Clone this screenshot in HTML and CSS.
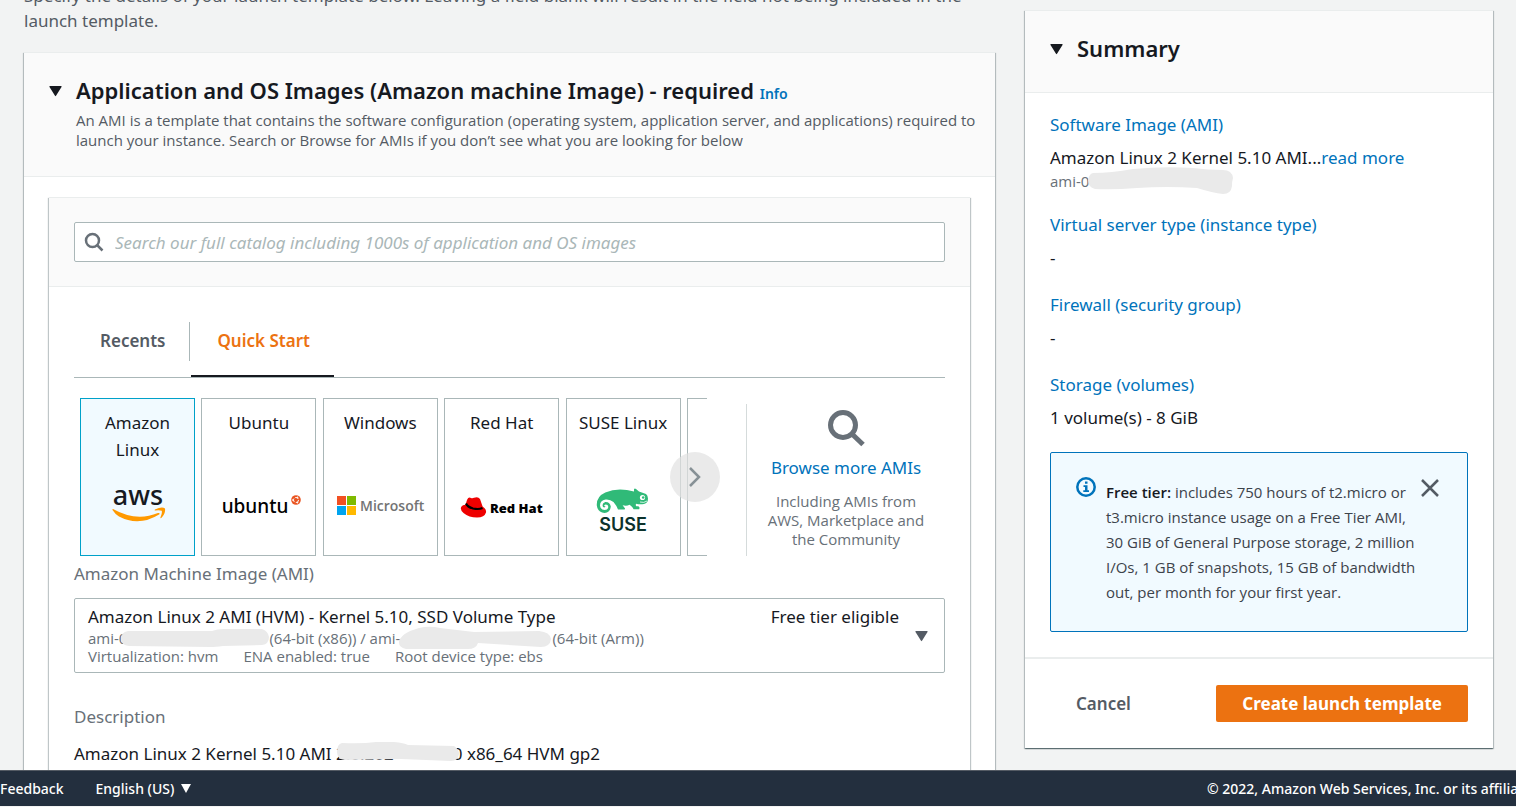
FILE: index.html
```html
<!DOCTYPE html>
<html lang="en">
<head>
<meta charset="utf-8">
<title>Create launch template</title>
<link rel="stylesheet" href="styles.css">
</head>
<body>
<main class="page">
  <div class="content">
    <p class="intro">Specify the details of your launch template below. Leaving a field blank will result in the field not being included in the launch template.</p>

    <section class="panel">
      <header class="panel-head">
        <svg class="caret" viewBox="0 0 13 11"><path d="M1 0h11q1 0 .5 1L7 9.800q-.5.800-1 0L.5 1Q0 0 1 0z"/></svg>
        <div>
          <h2 class="title">Application and OS Images (Amazon machine Image) - required <a class="info" href="#">Info</a></h2>
          <p class="lead">An AMI is a template that contains the software configuration (operating system, application server, and applications) required to launch your instance. Search or Browse for AMIs if you don’t see what you are looking for below</p>
        </div>
      </header>
      <div class="panel-body">
        <div class="catalog">
          <div class="catalog-search">
            <label class="search">
              <svg class="search-icon" viewBox="0 0 20 20"><circle cx="8.500" cy="8.500" r="6.500"/><path d="M13 13l5.500 5.500"/></svg>
              <input type="text" aria-label="Search catalog" placeholder="Search our full catalog including 1000s of application and OS images">
            </label>
          </div>
          <div class="catalog-body">
            <div class="tabs" role="tablist">
              <button class="tab" role="tab">Recents</button>
              <span class="tab-rule"></span>
              <button class="tab tab-active" role="tab" aria-selected="true">Quick Start</button>
            </div>

            <div class="picker">
              <div class="carousel">
                <button class="os os-selected"><span class="os-name">Amazon Linux</span>
                  <svg class="logo" viewBox="0 0 100 60">
                    <text class="logo-aws" x="50" y="27" text-anchor="middle">aws</text>
                    <path fill="#f90" d="M25 31q23 13 45 4 2-.5 1.500 1.200Q51 49 31 38.500q-4-2.500-6.500-6.500-.3-1 .5-1zM67 31.500q7-3.200 10-1 .8 5-3.700 9.500-1.200.6-.8-.8 2-4.500 1.200-6.500-2.200-.8-6.200-.2-1.400 0-.5-1z"/>
                  </svg></button>
                <button class="os"><span class="os-name">Ubuntu</span>
                  <svg class="logo" viewBox="0 0 100 60">
                    <text class="logo-ubuntu" x="46" y="35" text-anchor="middle">ubuntu</text>
                    <circle cx="87" cy="22" r="4.800" fill="#e95420"/>
                    <circle cx="87" cy="22" r="2.500" fill="none" stroke="#fff" stroke-width="1" stroke-dasharray="4 1.200"/>
                    <g fill="#fff"><circle cx="83.800" cy="22" r=".8"/><circle cx="88.600" cy="19.300" r=".8"/><circle cx="88.600" cy="24.700" r=".8"/></g>
                  </svg></button>
                <button class="os"><span class="os-name">Windows</span>
                  <svg class="logo" viewBox="0 0 100 60">
                    <path fill="#f25022" d="M7 18h9v9H7z"/><path fill="#7fba00" d="M17 18h9v9h-9z"/><path fill="#00a4ef" d="M7 28h9v9H7z"/><path fill="#ffb900" d="M17 28h9v9h-9z"/>
                    <text class="logo-ms" x="30" y="33">Microsoft</text>
                  </svg></button>
                <button class="os"><span class="os-name">Red Hat</span>
                  <svg class="logo" viewBox="0 0 100 60">
                    <g transform="translate(0 1)">
                      <path fill="#e00" d="M15 21q1.500-3.500 4-2 1.500.6 3-.2 4-1.800 6 1.200l2.600 7.500q4 2.500 3.400 6-1.500 5-9 5-8 0-13.500-4.500-4-3.500-2-6.500 1-1.500 4-1.800z"/>
                      <path fill="none" stroke="#000" stroke-width="2.200" d="M14 24.500q1.500 3.500 7 5 6 1.200 9.500-.5"/>
                    </g>
                    <text class="logo-redhat" x="38" y="35">Red Hat</text>
                  </svg></button>
                <button class="os"><span class="os-name">SUSE Linux</span>
                  <svg class="logo" viewBox="0 0 100 60">
                    <g transform="translate(0 4)">
                      <path fill="#30ba78" d="M61 7.500Q61.500 6 63 7l3 2.500 7 2.500q1.800 1 2 4.500 0 4.500-4 5.500-4 .8-8-.2-.5 1.500.3 2.500h2q2 1.200.8 3h-5.500q-1.200-2.600-4-4.500-3 1.500-7 .5l1.500 2q1.500 1 .5 2.300H45q-1.500-4-4.500-7.500-3.500-3-8-2.500-5.500 1-5.500 6 .5 4.400 4.700 4.400 3.600-.3 3.600-3.200-.2-2.400-2.600-2.400-1.700.3-1.500 1.700l1.500.5q-1.300 1.500-2.800.2-1.300-3.900 2.400-4.900 4.800-.2 5.500 4.700-.5 5.700-6.200 6.300-6.900-.4-7.800-7.500-.5-9 8.500-13Q45 5 61 9.500z"/>
                      <circle cx="69.500" cy="15.500" r="2.600" fill="#fff"/><circle cx="70.200" cy="15.500" r="1.300" fill="#30ba78"/>
                      <path fill="none" stroke="#fff" stroke-width=".8" d="M67 20q4 1.300 7-1"/>
                    </g>
                    <text class="logo-suse" x="50" y="53" text-anchor="middle">SUSE</text>
                  </svg></button>
                <span class="os-cut"></span>
                <button class="next" aria-label="Next"><svg viewBox="0 0 50 50"><path d="M20 16l9 9-9 9"/></svg></button>
              </div>
              <div class="browse">
                <svg class="browse-icon" viewBox="0 0 38 38"><circle cx="16" cy="16" r="12.500"/><path d="M25 25l11 10.500"/></svg>
                <a class="browse-link" href="#">Browse more AMIs</a>
                <p class="browse-note">Including AMIs from AWS, Marketplace and the Community</p>
              </div>
            </div>

            <div class="label" id="ami-label">Amazon Machine Image (AMI)</div>
            <button class="ami" aria-haspopup="listbox" aria-labelledby="ami-label">
              <span class="ami-text">
                <span class="ami-name">Amazon Linux 2 AMI (HVM) - Kernel 5.10, SSD Volume Type</span>
                <span class="ami-meta"><span class="ami-id">ami-0</span><svg class="smudge smudge-a" viewBox="0 0 148 20"><path d="M7 3h84q5-2 12-2h38q6 2 7 8 0 7-7 8l-39 1q-8 1-12 1L8 18Q0 17 0 11 0 4 7 3z"/></svg><span>(64-bit (x86)) / ami-</span><svg class="smudge smudge-b" viewBox="0 0 154 24"><path d="M26 1q8-1 16 1l34 4 65-1q11 1 12 8-1 8-10 8l-63-4q-2 6-10 6H8q-8-2-7-8Q5 5 26 1z"/></svg><span>(64-bit (Arm))</span></span>
                <span class="ami-meta ami-facts"><span>Virtualization: hvm</span><span>ENA enabled: true</span><span>Root device type: ebs</span></span>
              </span>
              <span class="ami-tier">Free tier eligible</span>
              <svg class="caret caret-grey" viewBox="0 0 13 11"><path d="M1 0h11q1 0 .5 1L7 9.800q-.5.800-1 0L.5 1Q0 0 1 0z"/></svg>
            </button>

            <div class="label label-desc">Description</div>
            <div class="desc"><span>Amazon Linux 2 Kernel 5.10 AMI 2.0.202</span><svg class="smudge smudge-c" viewBox="0 0 122 20"><path d="M5 1q20 1 34-1h18q10 1 14 3l46 1q5 3 5 8-1 7-8 7l-50-2-56 1Q0 17 0 10 0 2 5 1z"/></svg><span>0 x86_64 HVM gp2</span></div>
          </div>
        </div>
      </div>
    </section>
  </div>

  <aside class="panel summary">
    <header class="summary-head">
      <svg class="caret" viewBox="0 0 13 11"><path d="M1 0h11q1 0 .5 1L7 9.800q-.5.800-1 0L.5 1Q0 0 1 0z"/></svg>
      <h2 class="title">Summary</h2>
    </header>
    <div class="summary-body">
      <div class="fact">
        <a href="#">Software Image (AMI)</a>
        <span>Amazon Linux 2 Kernel 5.10 AMI...<a href="#">read more</a></span>
        <span class="fact-id"><span>ami-0</span><svg class="smudge smudge-d" viewBox="0 0 146 28"><path d="M5 6q18 0 40-4 30-3 60-1 15 2 30 2 9 0 10 8-1 3-1 8-1 8-9 8-10-1-26-6-30-2-60 0-24 2-42 1Q0 20 0 13 1 7 5 6z"/></svg></span>
      </div>
      <div class="fact"><a href="#">Virtual server type (instance type)</a><span>-</span></div>
      <div class="fact"><a href="#">Firewall (security group)</a><span>-</span></div>
      <div class="fact"><a href="#">Storage (volumes)</a><span>1 volume(s) - 8 GiB</span></div>
      <div class="notice">
        <svg class="notice-icon" viewBox="0 0 20 20"><circle cx="10" cy="10" r="8.700"/><path d="M9 4.500h2.500v2.200H9zM7.500 8.200h4v5h1.500v1.900H7.300v-1.900H9v-3.100H7.500z"/></svg>
        <p class="notice-text"><b>Free tier:</b> includes 750 hours of t2.micro or<br>t3.micro instance usage on a Free Tier AMI,<br>30 GiB of General Purpose storage, 2 million<br>I/Os, 1 GB of snapshots, 15 GB of bandwidth<br>out, per month for your first year.</p>
        <button class="close" aria-label="Dismiss"><svg viewBox="0 0 18 18"><path d="M1 1l16 16M17 1L1 17"/></svg></button>
      </div>
    </div>
    <footer class="actions">
      <button class="cancel">Cancel</button>
      <button class="create">Create launch template</button>
    </footer>
  </aside>
</main>
<footer class="bar">
  <a href="#">Feedback</a>
  <button class="lang">English (US) <svg viewBox="0 0 10 9"><path d="M0 0h10L5 9z"/></svg></button>
  <span class="legal">© 2022, Amazon Web Services, Inc. or its affiliates.</span>
</footer>
</body>
</html>
```
FILE: styles.css
```css
* { box-sizing: border-box; }
body {
  margin: 0;
  height: 100vh;
  display: flex;
  flex-direction: column;
  overflow: hidden;
  padding-bottom: 1px;
  background: #f2f3f3;
  color: #16191f;
  font: 17px/27px "Noto Sans", "Open Sans", sans-serif;
}
p, h2 { margin: 0; }
button { font: inherit; color: inherit; background: none; border: 0; padding: 0; text-align: inherit; }
a { color: #0073bb; text-decoration: none; }
svg { display: block; flex: none; }

.page {
  flex: 1;
  min-height: 0;
  overflow: hidden;
  display: grid;
  grid-template-columns: minmax(0, 1fr) 468px;
  column-gap: 30px;
  align-items: start;
  padding: 0 23px 0 24px;
}
.content { margin-top: -17px; }
.intro { color: #545b64; line-height: 25px; margin-bottom: 19px; }

.panel {
  background: #fff;
  border-top: 1px solid #eaeded;
  box-shadow: 0 1px 1px rgba(0, 28, 36, .4), 1px 1px 1px rgba(0, 28, 36, .2), -1px 1px 1px rgba(0, 28, 36, .2);
}
.panel-head {
  display: flex;
  gap: 14px;
  padding: 23px 16px 26px 25px;
  background: #fafafa;
  border-bottom: 1px solid #eaeded;
}
.caret { width: 13px; height: 11px; margin-top: 10px; fill: #16191f; }
.title { font-size: 22px; line-height: 28px; font-weight: 600; }
.info { font-size: 14px; line-height: 14px; font-weight: 600; }
.lead { margin-top: 6px; font: 15px/20px "Open Sans", sans-serif; color: #545b64; }
.panel-body { padding: 20px 25px; }

.catalog {
  min-height: 700px;
  border-top: 1px solid #eaeded;
  box-shadow: 1px 1px 1px rgba(0, 28, 36, .25), -1px 1px 1px rgba(0, 28, 36, .25);
}
.catalog-search { padding: 24px 25px; background: #fafafa; border-bottom: 1px solid #eaeded; }
.search {
  display: flex;
  align-items: center;
  gap: 11px;
  height: 40px;
  padding: 0 9px;
  background: #fff;
  border: 1px solid #aab7b8;
  border-radius: 2px;
}
.search-icon { width: 20px; height: 20px; fill: none; stroke: #687078; stroke-width: 2.500; }
.search input { flex: 1; min-width: 0; border: 0; padding: 0; outline: 0; background: none; font: inherit; }
.search input::placeholder { color: #aab7b8; font-style: italic; opacity: 1; }
.catalog-body { padding: 35px 25px; }

.tabs { display: flex; height: 56px; border-bottom: 1px solid #aab7b8; }
.tab { padding: 0 24px 18px 26px; font-weight: 600; color: #545b64; }
.tab-rule { width: 1px; height: 39px; margin-right: 1px; background: #aab7b8; }
.tab-active { color: #ec7211; border-bottom: 2px solid #16191f; padding-bottom: 16px; }

.picker { display: flex; margin: 20px 0 4px; }
.carousel {
  position: relative;
  flex: 1;
  display: flex;
  justify-content: space-between;
  margin: 0 39px 0 6px;
}
.os {
  display: flex;
  flex-direction: column;
  align-items: center;
  justify-content: space-between;
  flex: none;
  width: 115px;
  height: 158px;
  padding: 10px 7px 17px;
  border: 1px solid #aab7b8;
  text-align: center;
}
.os-selected { background: #f1faff; border-color: #00a1c9; padding-left: 20px; padding-right: 20px; }
.os-cut { width: 20px; border: 1px solid #aab7b8; border-right: 0; }
.logo { width: 100px; height: 60px; }
.logo-aws { font: 500 27px "Noto Sans", sans-serif; fill: #16191f; }
.logo-ubuntu { font: 500 19px "Noto Sans", sans-serif; }
.logo-ms { font: 600 14px "Open Sans", sans-serif; fill: #737373; }
.logo-redhat { font: 800 13px "Open Sans", sans-serif; }
.logo-suse { font: 600 18px "Inter", sans-serif; fill: #0c322c; }
.next {
  position: absolute;
  right: -13px;
  top: 54px;
  width: 50px;
  height: 50px;
  border-radius: 50%;
  background: rgba(225, 225, 225, .7);
}
.next svg { fill: none; stroke: #879196; stroke-width: 2.500; }
.browse {
  width: 199px;
  margin-top: 6px;
  padding-top: 5px;
  border-left: 1px solid #d5dbdb;
  display: flex;
  flex-direction: column;
  align-items: center;
}
.browse-icon { width: 38px; height: 38px; fill: none; stroke: #687078; stroke-width: 5; }
.browse-link { margin-top: 7px; }
.browse-note { margin-top: 11px; width: 170px; font: 15px/19px "Open Sans", sans-serif; text-align: center; color: #687078; }

.label { color: #687078; }
.ami {
  display: flex;
  align-items: flex-start;
  width: 100%;
  margin-top: 11px;
  padding: 5px 16px 7px 13px;
  border: 1px solid #aab7b8;
  border-radius: 2px;
}
.ami-text { flex: 1; display: flex; flex-direction: column; }
.ami-name { line-height: 25px; }
.ami-meta { display: flex; align-items: center; height: 18px; font: 15px/18px "Open Sans", sans-serif; color: #687078; white-space: nowrap; }
.ami-facts { gap: 25px; }
.ami-tier { margin-right: 16px; line-height: 25px; }
.ami .caret { margin-top: 27px; }
.ami .caret-grey { fill: #545b64; }
.smudge { position: relative; fill: #eaeaea; margin-left: -6px; }
.smudge-a { width: 148px; height: 20px; }
.smudge-b { width: 154px; height: 24px; margin-left: -2px; }
.smudge-c { width: 122px; height: 20px; margin: 0 -6px 3px -57px; }
.smudge-d { width: 146px; height: 28px; margin-left: -1px; }
.label-desc { margin-top: 30px; }
.desc { display: flex; align-items: center; margin-top: 10px; }

.summary { margin-top: 10px; }
.summary-head { display: flex; gap: 14px; padding: 23px 25px 30px; background: #fafafa; border-bottom: 1px solid #eaeded; }
.summary-body { display: flex; flex-direction: column; gap: 20px; padding: 18px 25px 25px; border-bottom: 2px solid #eaeded; }
.fact { display: flex; flex-direction: column; gap: 6px; }
.fact-id { display: flex; align-items: center; height: 21px; margin-top: -7px; font: 15px/20px "Open Sans", sans-serif; color: #687078; }
.notice {
  display: flex;
  align-items: flex-start;
  margin-top: 1px;
  padding: 24px 28px 26px 25px;
  background: #f1faff;
  border: 1px solid #0073bb;
  border-radius: 2px;
}
.notice-icon { width: 20px; height: 20px; }
.notice-icon circle { fill: none; stroke: #0073bb; stroke-width: 2.500; }
.notice-icon path { fill: #0073bb; }
.notice-text { flex: 1; margin: 3px 0 0 10px; font: 15px/25px "Open Sans", sans-serif; color: #3d434b; white-space: nowrap; }
.notice-text b { font-weight: 600; color: #16191f; }
.close { margin-top: 2px; }
.close svg { width: 18px; height: 18px; stroke: #545b64; stroke-width: 2.500; }
.actions { display: flex; justify-content: space-between; align-items: center; padding: 26px 25px; }
.cancel { padding-left: 26px; font-weight: 600; color: #545b64; }
.create { height: 37px; padding: 0 26px; border-radius: 2px; background: #ec7211; color: #fff; font-weight: 700; }

.bar {
  display: flex;
  align-items: center;
  height: 36px;
  flex: none;
  overflow: hidden;
  border-top: 1px solid #545b64;
  background: #232f3e;
  color: #fff;
  font-size: 14px;
  font-weight: 500;
  white-space: nowrap;
}
.bar a { color: #fff; }
.lang { display: flex; align-items: center; gap: 7px; margin-left: 32px; }
.lang svg { width: 10px; height: 9px; fill: #fff; }
.legal { margin-left: auto; width: 309px; }
```
